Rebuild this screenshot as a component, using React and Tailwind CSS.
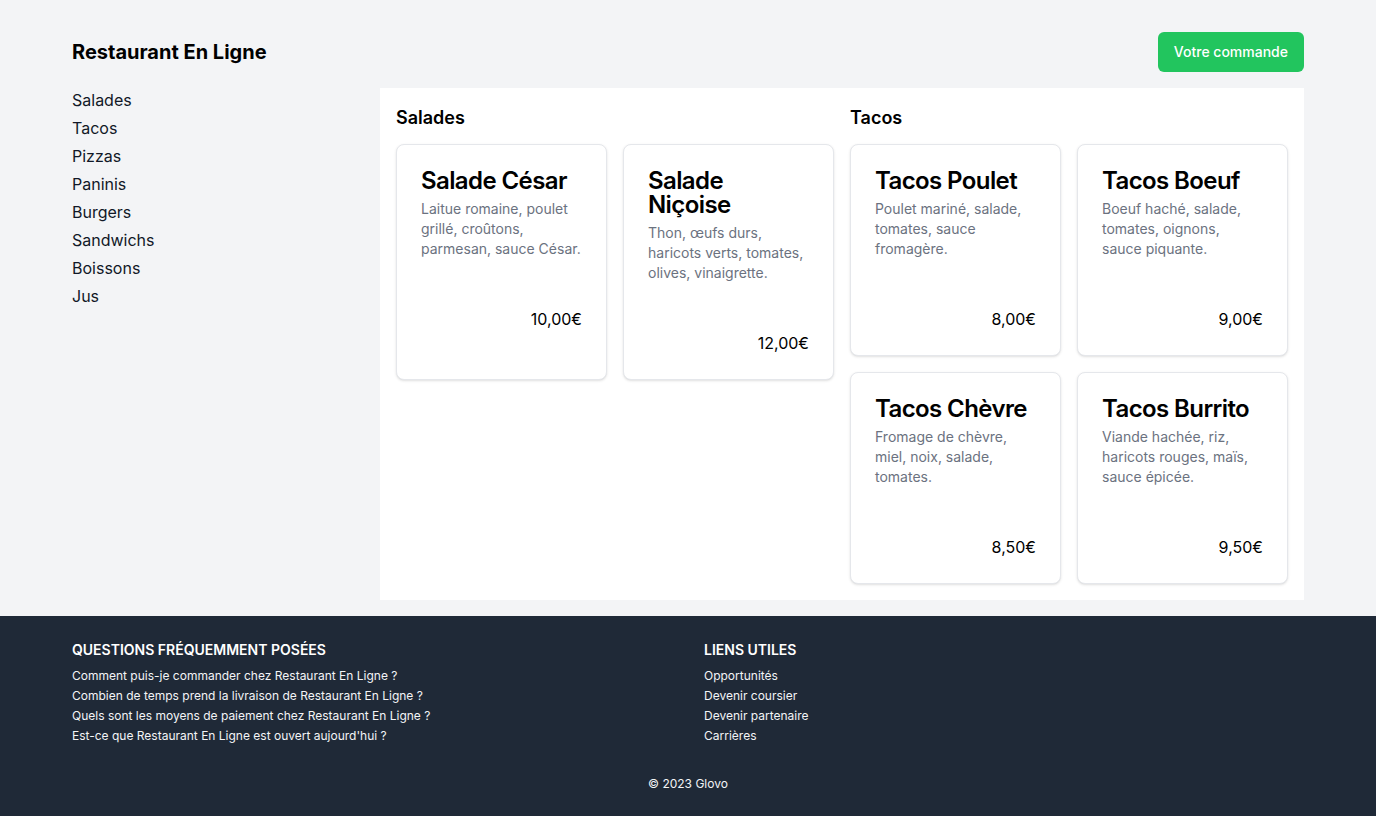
import React from 'react';

const categories = ['Salades', 'Tacos', 'Pizzas', 'Paninis', 'Burgers', 'Sandwichs', 'Boissons', 'Jus'];

const sections = [
  {
    title: 'Salades',
    items: [
      { name: 'Salade César', desc: 'Laitue romaine, poulet grillé, croûtons, parmesan, sauce César.', price: '10,00€' },
      { name: 'Salade Niçoise', desc: 'Thon, œufs durs, haricots verts, tomates, olives, vinaigrette.', price: '12,00€' },
    ],
  },
  {
    title: 'Tacos',
    items: [
      { name: 'Tacos Poulet', desc: 'Poulet mariné, salade, tomates, sauce fromagère.', price: '8,00€' },
      { name: 'Tacos Boeuf', desc: 'Boeuf haché, salade, tomates, oignons, sauce piquante.', price: '9,00€' },
      { name: 'Tacos Chèvre', desc: 'Fromage de chèvre, miel, noix, salade, tomates.', price: '8,50€' },
      { name: 'Tacos Burrito', desc: 'Viande hachée, riz, haricots rouges, maïs, sauce épicée.', price: '9,50€' },
    ],
  },
];

const faq = [
  'Comment puis-je commander chez Restaurant En Ligne ?',
  'Combien de temps prend la livraison de Restaurant En Ligne ?',
  'Quels sont les moyens de paiement chez Restaurant En Ligne ?',
  "Est-ce que Restaurant En Ligne est ouvert aujourd'hui ?",
];

const liens = ['Opportunités', 'Devenir coursier', 'Devenir partenaire', 'Carrières'];

const ProductCard = ({ item }) => (
  <div className="bg-white border border-[#e5e7eb] rounded-lg shadow-sm p-6">
    <h3 className="text-2xl font-semibold leading-none tracking-tight text-black">{item.name}</h3>
    <p className="mt-1.5 text-sm text-[#6b7280]">{item.desc}</p>
    <div className="mt-12 text-right text-base text-black">{item.price}</div>
  </div>
);

const App = () => {
  return (
    <div className="min-h-screen bg-[#f3f4f6] font-['Inter',sans-serif] text-[#111827]">
      <div className="max-w-7xl mx-auto px-6">
        {/* Header */}
        <header className="flex justify-between items-center pt-8 pb-4">
          <h1 className="text-xl font-bold text-black">Restaurant En Ligne</h1>
          <button className="bg-[#22c55e] text-white text-sm font-medium px-4 h-10 rounded-md">
            Votre commande
          </button>
        </header>

        {/* Main */}
        <div className="grid grid-cols-4">
          <nav className="col-span-1 flex flex-col gap-1">
            {categories.map(c => (
              <a key={c} className="text-base text-[#111827] cursor-pointer">{c}</a>
            ))}
          </nav>
          <main className="col-span-3 bg-white p-4 grid grid-cols-2 gap-4 items-start">
            {sections.map(s => (
              <section key={s.title}>
                <h2 className="text-lg font-semibold text-black mb-3">{s.title}</h2>
                <div className="grid grid-cols-2 gap-4">
                  {s.items.map(item => <ProductCard key={item.name} item={item} />)}
                </div>
              </section>
            ))}
          </main>
        </div>
      </div>

      {/* Footer */}
      <footer className="mt-4 bg-[#1f2937] text-white">
        <div className="max-w-7xl mx-auto px-6 pt-6 pb-6">
          <div className="grid grid-cols-2 gap-8">
            <div>
              <h4 className="text-sm font-semibold uppercase mb-2">Questions fréquemment posées</h4>
              <ul className="flex flex-col gap-1 text-xs text-[#f3f4f6]">
                {faq.map(q => <li key={q}>{q}</li>)}
              </ul>
            </div>
            <div>
              <h4 className="text-sm font-semibold uppercase mb-2">Liens utiles</h4>
              <ul className="flex flex-col gap-1 text-xs text-[#f3f4f6]">
                {liens.map(l => <li key={l}>{l}</li>)}
              </ul>
            </div>
          </div>
          <p className="mt-8 text-center text-xs text-[#f3f4f6]">© 2023 Glovo</p>
        </div>
      </footer>
    </div>
  );
};

export default App;
